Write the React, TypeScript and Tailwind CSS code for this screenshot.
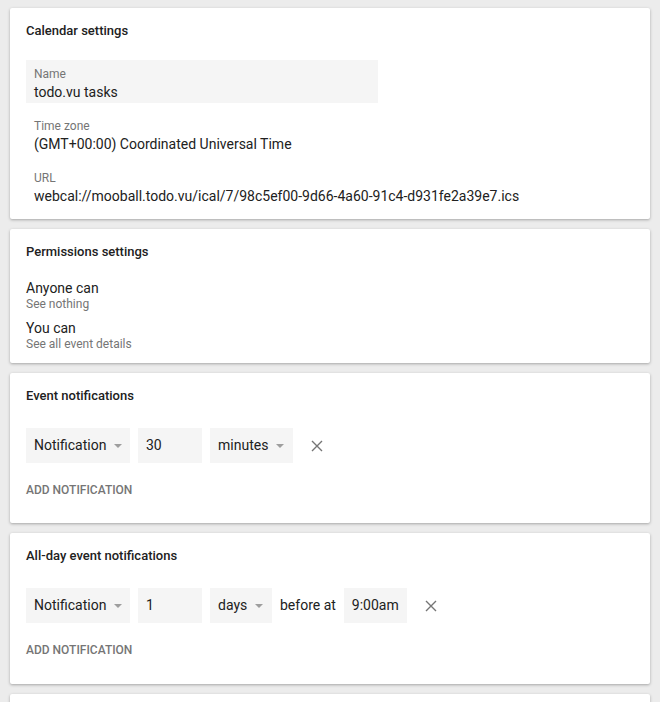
import React from "react";

const font = { fontFamily: "Roboto, 'Liberation Sans', sans-serif" };

function Card({ title, children, className = "" }: { title: string; children: React.ReactNode; className?: string }) {
  return (
    <div className={`bg-white rounded-[2px] shadow-[0_1px_3px_rgba(0,0,0,0.3)] px-4 pt-[15px] ${className}`}>
      <div className="text-[13px] leading-4 font-medium text-[#212121]">{title}</div>
      {children}
    </div>
  );
}

function Caret() {
  return (
    <svg width="8" height="4" viewBox="0 0 8 4" className="ml-2 shrink-0">
      <path d="M0 0h8L4 4z" fill="#9e9e9e" />
    </svg>
  );
}

function Select({ value, w }: { value: string; w: string }) {
  return (
    <div className={`${w} h-[35px] bg-[#f5f5f5] flex items-center pl-2 pr-[9px] justify-between text-[14px] text-[#212121]`}>
      <span>{value}</span>
      <Caret />
    </div>
  );
}

function Field({ value, w }: { value: string; w: string }) {
  return (
    <div className={`${w} h-[35px] bg-[#f5f5f5] flex items-center px-2 text-[14px] text-[#212121]`}>{value}</div>
  );
}

function Remove() {
  return (
    <div className="ml-1 w-6 h-6 flex items-center justify-center">
      <svg width="12" height="12" viewBox="0 0 12 12">
        <path d="M1 1l10 10M11 1L1 11" stroke="#757575" strokeWidth="1.4" />
      </svg>
    </div>
  );
}

function InfoBlock({ label, value, filled }: { label: string; value: string; filled?: boolean }) {
  return (
    <div className={`h-[43px] px-2 pt-[6px] ${filled ? "bg-[#f5f5f5] w-[352px]" : ""}`}>
      <div className="text-[12px] leading-4 text-[#757575]">{label}</div>
      <div className="text-[14px] leading-5 text-[#212121] whitespace-nowrap">{value}</div>
    </div>
  );
}

function Permission({ who, what }: { who: string; what: string }) {
  return (
    <div>
      <div className="text-[14px] leading-[18px] text-[#212121]">{who}</div>
      <div className="text-[12px] leading-[14px] text-[#757575]">{what}</div>
    </div>
  );
}

function AddNotification() {
  return (
    <div className="mt-[19px] text-[12px] leading-4 font-medium uppercase text-[#757575]">Add notification</div>
  );
}

export default function App() {
  return (
    <div style={font} className="bg-[#ececec] px-[10px] pt-2 flex flex-col gap-[10px] overflow-hidden h-[702px]">
      <Card title="Calendar settings" className="pb-3">
        <div className="mt-[21px] flex flex-col gap-[9px]">
          <InfoBlock label="Name" value="todo.vu tasks" filled />
          <InfoBlock label="Time zone" value="(GMT+00:00) Coordinated Universal Time" />
          <InfoBlock label="URL" value="webcal://mooball.todo.vu/ical/7/98c5ef00-9d66-4a60-91c4-d931fe2a39e7.ics" />
        </div>
      </Card>

      <Card title="Permissions settings" className="pb-3">
        <div className="mt-[19px] flex flex-col gap-2">
          <Permission who="Anyone can" what="See nothing" />
          <Permission who="You can" what="See all event details" />
        </div>
      </Card>

      <Card title="Event notifications" className="pb-[25px]">
        <div className="mt-6 flex items-center gap-2">
          <Select value="Notification" w="w-[104px]" />
          <Field value="30" w="w-[64px]" />
          <Select value="minutes" w="w-[83px]" />
          <Remove />
        </div>
        <AddNotification />
      </Card>

      <Card title="All-day event notifications" className="pb-[26px]">
        <div className="mt-6 flex items-center gap-2">
          <Select value="Notification" w="w-[104px]" />
          <Field value="1" w="w-[64px]" />
          <Select value="days" w="w-[62px]" />
          <span className="text-[14px] text-[#212121]">before at</span>
          <Field value="9:00am" w="w-[63px]" />
          <Remove />
        </div>
        <AddNotification />
      </Card>

      <div className="bg-white rounded-[2px] shadow-[0_1px_3px_rgba(0,0,0,0.3)] h-[40px] shrink-0" />
    </div>
  );
}
